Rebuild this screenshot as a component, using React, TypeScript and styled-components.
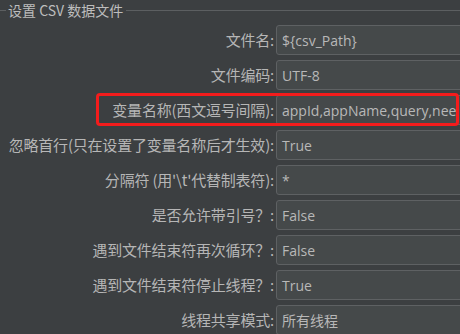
import React from 'react'
import styled, { createGlobalStyle } from 'styled-components'

const GlobalStyle = createGlobalStyle`
  html, body {
    margin : 0;
    padding : 0;
    background : #3c3f41;
    overflow : hidden;
  }
`

const Panel = styled.div`
  width : 460px;
  height : 334px;
  overflow : hidden;
  background : #3c3f41;
  font-family : "Noto Sans CJK SC", "Noto Sans", sans-serif;
  color : #bbbbbb;
`

const TitleBar = styled.div`
  display : flex;
  align-items : center;
  height : 21px;
  margin-bottom : 4px;
`
const TitleLine = styled.div<{ $grow?: boolean }>`
  height : 1px;
  background : #5c5f61;
  width : ${props => props.$grow ? 'auto' : '6px'};
  flex : ${props => props.$grow ? '1' : 'none'};
`
const Title = styled.span`
  font-size : 14px;
  line-height : 21px;
  padding : 0 3px 0 2px;
  color : #bdbdbd;
  white-space : nowrap;
`

const Rows = styled.div`
  display : flex;
  flex-direction : column;
  gap : 5px;
`
const Row = styled.div`
  position : relative;
  display : flex;
  align-items : center;
  height : 30px;
`
const Label = styled.div`
  width : 274px;
  flex : none;
  text-align : right;
  font-size : 15px;
  line-height : 30px;
  white-space : nowrap;
  color : #b6b6b6;
  letter-spacing : -0.2px;
`
const Field = styled.div`
  flex : none;
  width : 200px;
  margin-left : 2px;
  height : 30px;
  box-sizing : border-box;
  border : 1px solid #5e6163;
  border-radius : 3px;
  background : #45494a;
  padding-left : 5px;
  display : flex;
  align-items : center;
  font-family : "Open Sans", "Noto Sans CJK SC", sans-serif;
  font-size : 14px;
  color : #b8b8b8;
  white-space : nowrap;
  overflow : hidden;
`
const Highlight = styled.div`
  position : absolute;
  left : 96px;
  width : 363px;
  top : -2px;
  bottom : -1px;
  box-sizing : border-box;
  border : 3px solid #f41c1c;
  border-radius : 4px;
  pointer-events : none;
`

const settings = [
  { label: '文件名:', value: '${csv_Path}' },
  { label: '文件编码:', value: 'UTF-8' },
  { label: '变量名称(西文逗号间隔):', value: 'appId,appName,query,nee', marked: true },
  { label: '忽略首行(只在设置了变量名称后才生效):', value: 'True' },
  { label: '分隔符 (用\'\\t\'代替制表符):', value: '*' },
  { label: '是否允许带引号？:', value: 'False' },
  { label: '遇到文件结束符再次循环？:', value: 'False' },
  { label: '遇到文件结束符停止线程？:', value: 'True' },
  { label: '线程共享模式:', value: '所有线程' },
]

function App() {
  return (
    <Panel>
      <GlobalStyle />
      <TitleBar>
        <TitleLine />
        <Title>设置 CSV 数据文件</Title>
        <TitleLine $grow />
      </TitleBar>
      <Rows>
        {settings.map(item => (
          <Row key={item.label}>
            <Label>{item.label}</Label>
            <Field>{item.value}</Field>
            {item.marked && <Highlight />}
          </Row>
        ))}
      </Rows>
    </Panel>
  )
}

export default App
